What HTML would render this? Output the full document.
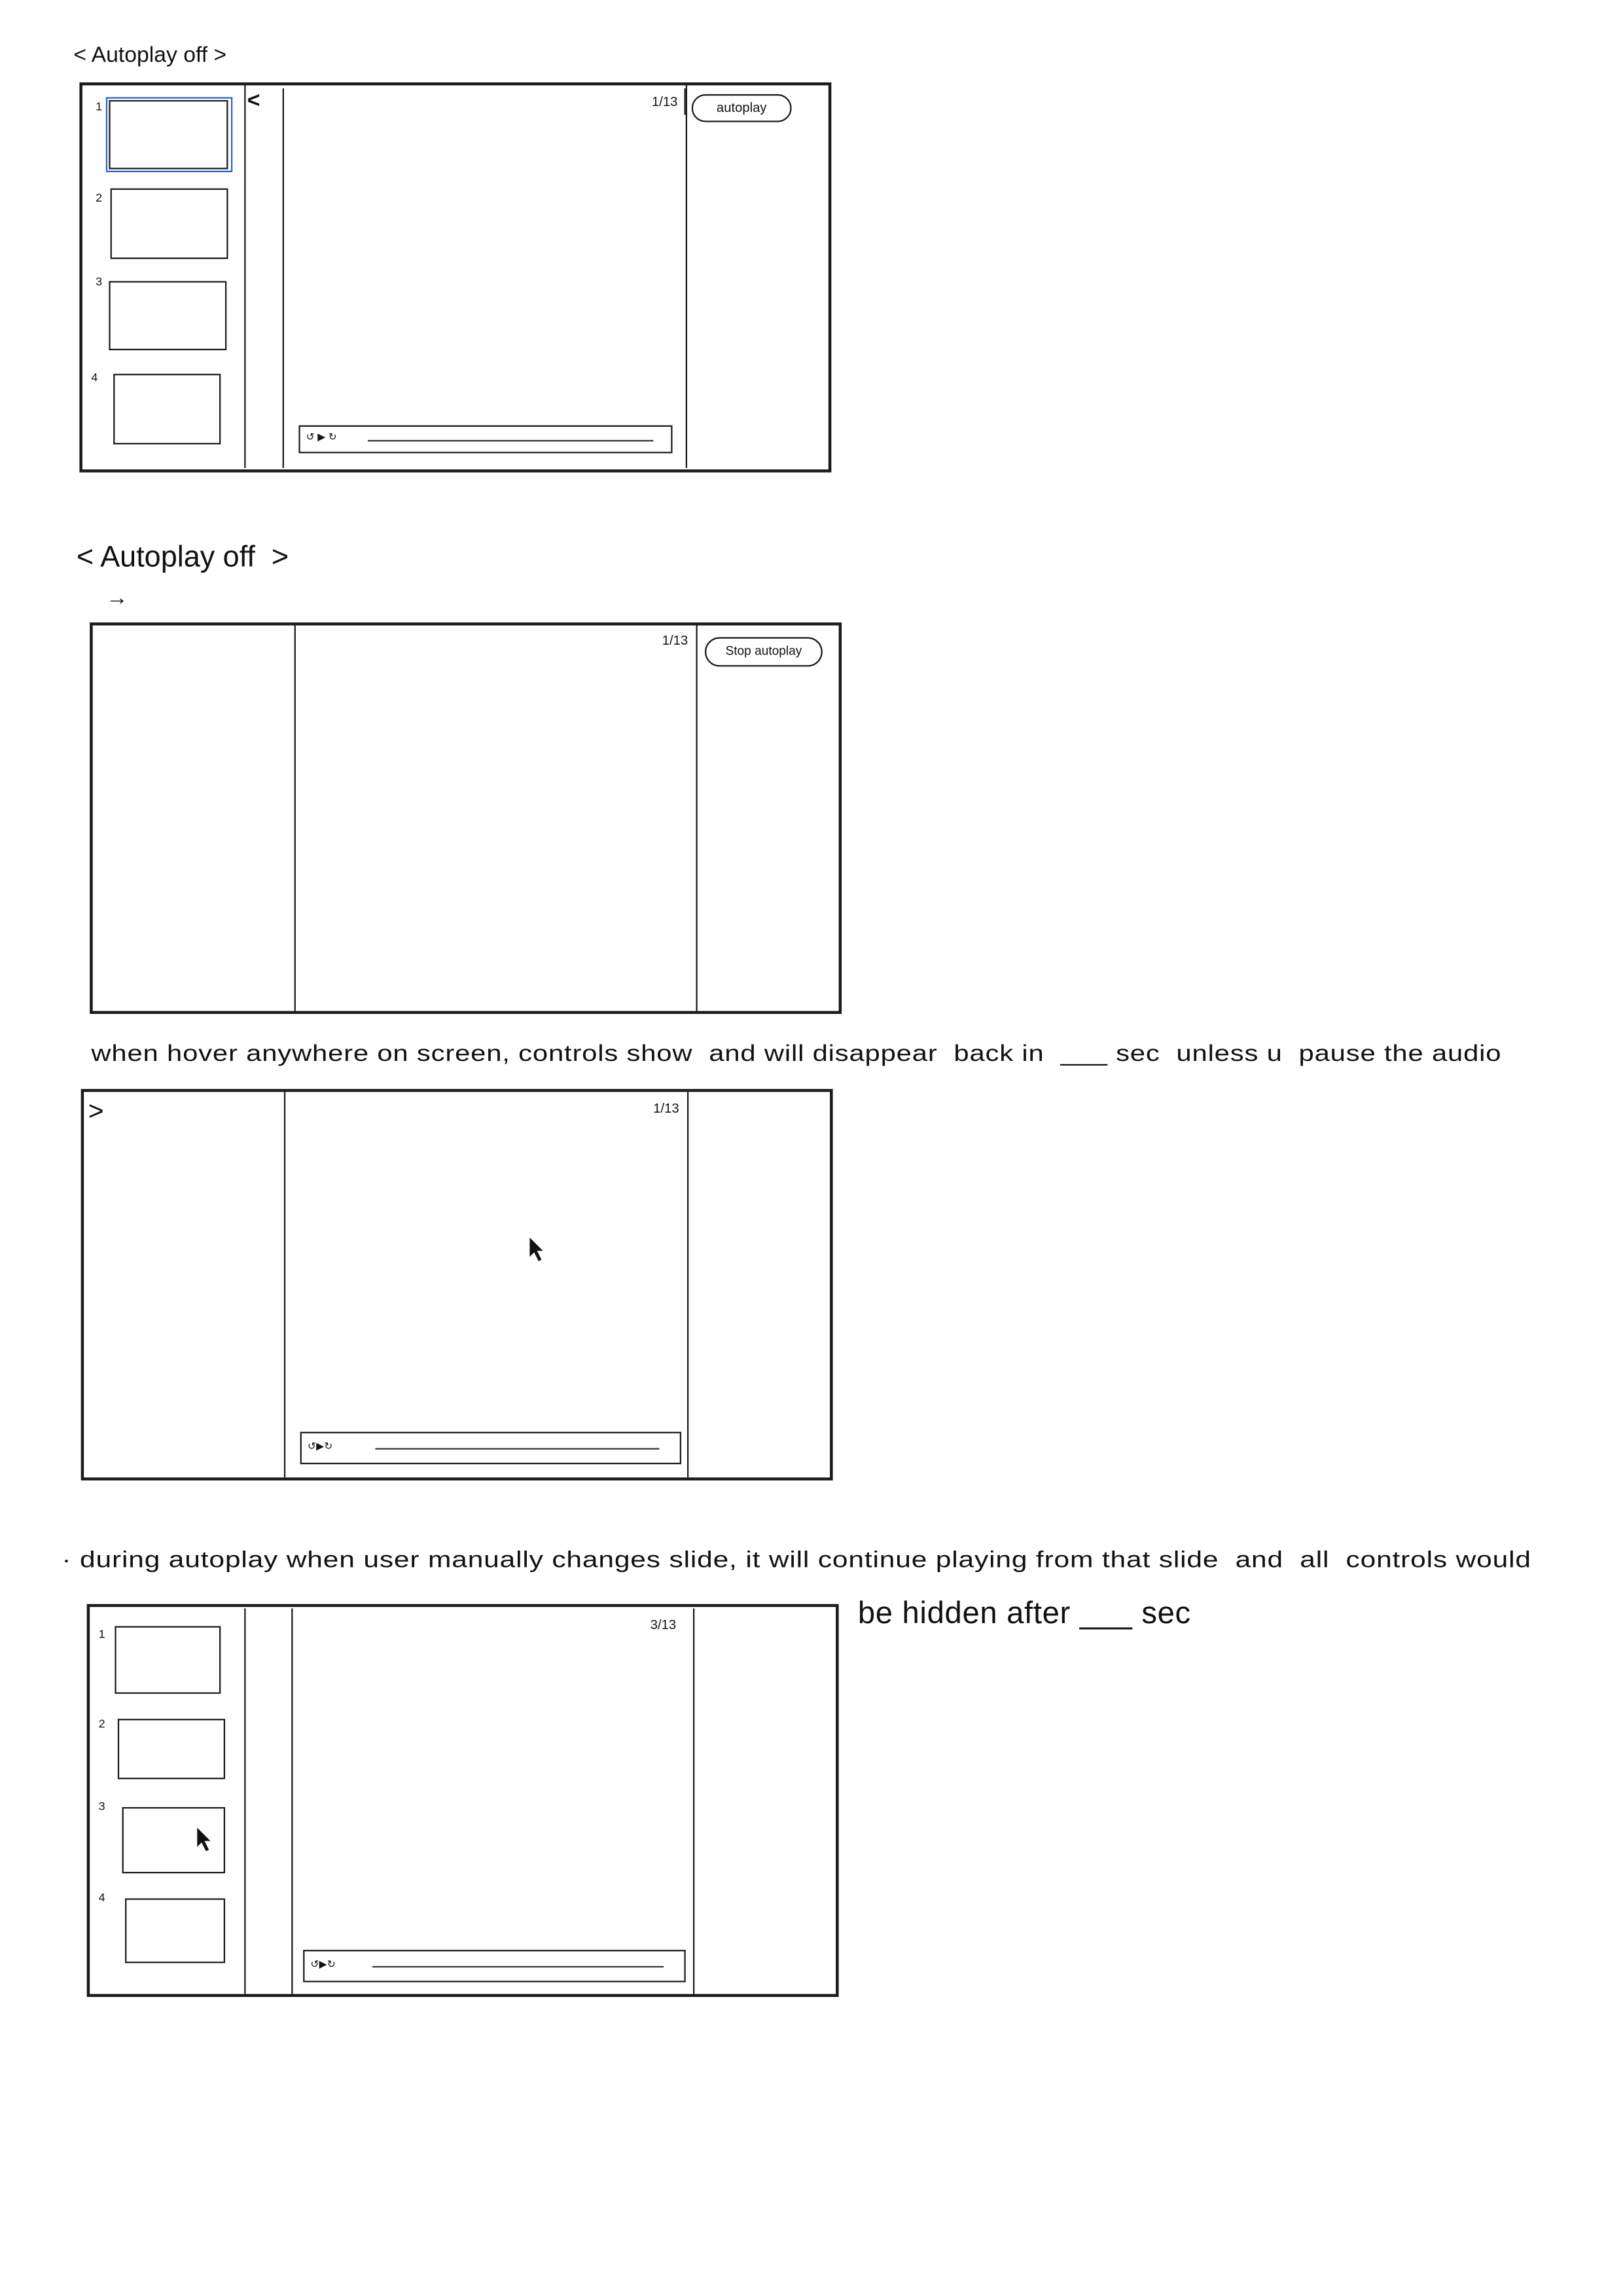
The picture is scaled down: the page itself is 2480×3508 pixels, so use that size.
<!DOCTYPE html>
<html><head><meta charset="utf-8"><style>
html,body{margin:0;padding:0;background:#fff;}
body{width:2480px;height:3508px;overflow:hidden;position:relative;}
#w{position:absolute;left:0;top:0;width:1103px;height:1560px;transform:scale(2.2484);transform-origin:0 0;font-family:"Liberation Sans",sans-serif;color:#111;}
.a{position:absolute;}
.b{position:absolute;border:1.6px solid #1a1a1a;box-sizing:border-box;}
.f{position:absolute;border:2px solid #1a1a1a;box-sizing:border-box;}
.v{position:absolute;width:0;border-left:1.3px solid #1a1a1a;}
.t{position:absolute;font-size:9px;white-space:nowrap;}
.n{position:absolute;font-size:8px;}
.pill{position:absolute;border:1.4px solid #1a1a1a;border-radius:10px;box-sizing:border-box;font-size:9px;text-align:center;line-height:16px;}
.ctl{position:absolute;border:1.4px solid #1a1a1a;box-sizing:border-box;font-size:7px;}
.ctl i{position:absolute;height:0;border-top:1.4px solid #333;}
.note{position:absolute;font-size:15.5px;white-space:nowrap;letter-spacing:0.3px;transform-origin:0 0;}
</style></head><body><div id="w">

<div class="t" style="left:50px;top:29px;font-size:15px;">&lt; Autoplay off &gt;</div>
<div class="f" style="left:54px;top:56px;width:511px;height:265px;"></div>
<div class="v" style="left:166px;top:58px;height:260px;"></div>
<div class="v" style="left:192px;top:60px;height:258px;"></div>
<div class="v" style="left:466px;top:58px;height:260px;"></div>
<div class="n" style="left:65px;top:68px;">1</div>
<div class="b" style="left:72px;top:66px;width:86px;height:51px;border:1.8px solid #2a62c8;"></div>
<div class="b" style="left:74px;top:68px;width:81px;height:47px;"></div>
<div class="n" style="left:65px;top:130px;">2</div>
<div class="b" style="left:75px;top:128px;width:80px;height:48px;"></div>
<div class="n" style="left:65px;top:187px;">3</div>
<div class="b" style="left:74px;top:191px;width:80px;height:47px;"></div>
<div class="n" style="left:62px;top:252px;">4</div>
<div class="b" style="left:77px;top:254px;width:73px;height:48px;"></div>
<div class="t" style="left:168px;top:60px;font-size:15px;font-weight:bold;">&lt;</div>
<div class="t" style="left:443px;top:64px;">1/13</div>
<div class="v" style="left:465px;top:60px;height:18px;"></div>
<div class="pill" style="left:470px;top:64px;width:68px;height:19px;">autoplay</div>
<div class="ctl" style="left:203px;top:289px;width:254px;height:19px;"><span style="position:absolute;left:4px;top:3px;">↺ ▶ ↻</span><i style="left:46px;right:12px;top:9px;"></i></div>

<div class="t" style="left:52px;top:368px;font-size:20px;">&lt; Autoplay off &nbsp;&gt;</div>
<div class="t" style="left:72px;top:398px;font-size:15px;">→</div>
<div class="f" style="left:61px;top:423px;width:511px;height:266px;"></div>
<div class="v" style="left:200px;top:425px;height:262px;"></div>
<div class="v" style="left:473px;top:425px;height:262px;"></div>
<div class="t" style="left:450px;top:430px;">1/13</div>
<div class="pill" style="left:479px;top:433px;width:80px;height:20px;font-size:8.5px;">Stop autoplay</div>

<div class="note" style="left:62px;top:708px;transform:scaleX(1.2);">when hover anywhere on screen, controls show &nbsp;and will disappear &nbsp;back in &nbsp;___ sec &nbsp;unless u &nbsp;pause the audio</div>
<div class="f" style="left:55px;top:740px;width:511px;height:266px;"></div>
<div class="v" style="left:193px;top:742px;height:262px;"></div>
<div class="v" style="left:467px;top:742px;height:262px;"></div>
<div class="t" style="left:60px;top:745px;font-size:18px;">&gt;</div>
<div class="t" style="left:444px;top:748px;">1/13</div>
<svg class="a" style="left:358px;top:840px;" width="14" height="18" viewBox="0 0 14 18"><path d="M2 1 L2 14 L5 11 L8 17 L10 16 L7 10 L11 10 Z" fill="#111"/></svg>
<div class="ctl" style="left:204px;top:973px;width:259px;height:22px;"><span style="position:absolute;left:4px;top:5px;">↺▶↻</span><i style="left:50px;right:14px;top:10px;"></i></div>

<div class="note" style="left:42px;top:1052px;transform:scaleX(1.22);">· during autoplay when user manually changes slide, it will continue playing from that slide &nbsp;and &nbsp;all &nbsp;controls would</div>
<div class="note" style="left:583px;top:1085px;font-size:21px;">be hidden after ___ sec</div>
<div class="f" style="left:59px;top:1090px;width:511px;height:267px;"></div>
<div class="v" style="left:166px;top:1093px;height:262px;"></div>
<div class="v" style="left:198px;top:1093px;height:262px;"></div>
<div class="v" style="left:471px;top:1093px;height:262px;"></div>
<div class="n" style="left:67px;top:1106px;">1</div>
<div class="b" style="left:78px;top:1105px;width:72px;height:46px;"></div>
<div class="n" style="left:67px;top:1167px;">2</div>
<div class="b" style="left:80px;top:1168px;width:73px;height:41px;"></div>
<div class="n" style="left:67px;top:1223px;">3</div>
<div class="b" style="left:83px;top:1228px;width:70px;height:45px;"></div>
<svg class="a" style="left:132px;top:1241px;" width="14" height="18" viewBox="0 0 14 18"><path d="M2 1 L2 14 L5 11 L8 17 L10 16 L7 10 L11 10 Z" fill="#111"/></svg>
<div class="n" style="left:67px;top:1285px;">4</div>
<div class="b" style="left:85px;top:1290px;width:68px;height:44px;"></div>
<div class="t" style="left:442px;top:1099px;">3/13</div>
<div class="ctl" style="left:206px;top:1325px;width:260px;height:22px;"><span style="position:absolute;left:4px;top:5px;">↺▶↻</span><i style="left:46px;right:14px;top:10px;"></i></div>

</div></body></html>
